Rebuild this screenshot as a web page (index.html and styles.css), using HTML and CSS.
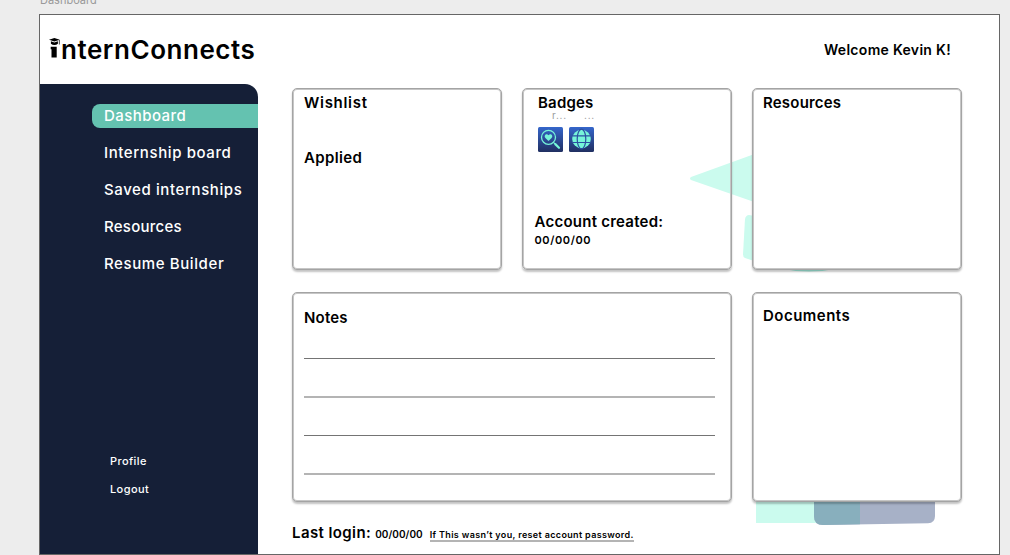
FILE: index.html
```html
<!DOCTYPE html>
<html lang="en">
<head>
<meta charset="utf-8">
<title>Dashboard</title>
<link rel="stylesheet" href="styles.css">
</head>
<body>
<div class="frame-name">Dashboard</div>
<div class="artboard">
  <header class="header">
    <div class="logo">
      <svg class="logo-mark" width="11" height="21" viewBox="0 0 11 21">
        <path d="M0 1.800 5.400.1l5.400 1.700-5.400 1.800z"/>
        <path d="M1.900 3.200v2.600c1.900 1.600 5.100 1.600 7 0V3.200L5.400 4.400z"/>
        <path d="M9.900 1.900h.7v4.600h-.7zM1.700 8.700h6v10.800H2.500V11.200h-.8z"/>
      </svg>
      <span class="logo-text">nternConnects</span>
    </div>
    <div class="welcome">Welcome Kevin K!</div>
  </header>
  <div class="body">
    <aside class="sidebar">
      <nav class="nav">
        <a class="nav-item active">Dashboard</a>
        <a class="nav-item">Internship board</a>
        <a class="nav-item">Saved internships</a>
        <a class="nav-item tight">Resources</a>
        <a class="nav-item">Resume Builder</a>
      </nav>
      <div class="account-links"><a>Profile</a><a>Logout</a></div>
    </aside>
    <main class="main">
      <svg class="decor" width="741" height="470" viewBox="258 84 741 470">
        <path fill="#cbfbee" d="M691 177 760 152v52l-69-24q-2-1.500 0-3z"/>
        <path fill="#cbfbee" d="M745 219q1-4 4-4l11 2v46l-15-5q-2-1-2-3.500z"/>
        <path fill="#a4efdf" d="M778 268h62q-31 7-62 0z"/>
        <path fill="#cbfbee" d="M756 495h104v28H756z"/>
        <path fill="#a7b1c7" d="M814 490h121v26q0 7-7 7.300L823 525q-9 0-9-9z"/>
        <path fill="#88afbd" d="M814 490h46v34.300L823 525q-9 0-9-9z"/>
      </svg>
      <div class="cards">
        <section class="card"><h2 class="wish">Wishlist</h2><h2 class="applied">Applied</h2></section>
        <section class="card badges">
          <h2>Badges</h2>
          <div class="badge-names"><span>r...</span><span>...</span></div>
          <div class="badge-row">
            <svg width="25" height="25" viewBox="0 0 25 25">
              <defs><linearGradient id="blue" x2="0" y2="1"><stop stop-color="#3566cb"/><stop offset="1" stop-color="#202f61"/></linearGradient></defs>
              <rect width="25" height="25" rx="1.500" fill="url(#blue)"/>
              <circle cx="10.500" cy="10.300" r="7" fill="none" stroke="#76f5d9" stroke-width="1.300"/>
              <path d="m15.500 15.300 1.600 1.600" stroke="#76f5d9" stroke-width="1.200"/>
              <path d="m17.300 17.100 3.700 3.700" stroke="#76f5d9" stroke-width="2.200" stroke-linecap="round"/>
              <path d="M10.500 14 7.400 11C5.400 8.800 8.300 5.900 10.500 8.200c2.200-2.300 5.100.6 3.100 2.800z" fill="#76f5d9"/>
            </svg>
            <svg width="25" height="25" viewBox="0 0 25 25">
              <rect width="25" height="25" rx="1.500" fill="url(#blue)"/>
              <circle cx="12.500" cy="12" r="9.300" fill="#76f5d9"/>
              <g fill="none" stroke="#2b50a1" stroke-width="1.200"><ellipse cx="12.500" cy="12" rx="4.300" ry="9.800"/><path d="M3 8.800h19M3 15.500h19"/></g>
            </svg>
          </div>
          <h2 class="created">Account created:</h2>
          <div class="date">00/00/00</div>
        </section>
        <section class="card"><h2 class="resources">Resources</h2></section>
        <section class="card notes">
          <h2>Notes</h2>
          <div class="lines"><i></i><i class="soft"></i><i></i><i class="soft"></i></div>
        </section>
        <section class="card documents"><h2 class="docs-title">Documents</h2></section>
      </div>
      <footer class="login">
        <span class="login-label">Last login:</span>
        <span class="login-date">00/00/00</span>
        <a class="reset">If This wasn’t you, reset account password.</a>
      </footer>
    </main>
  </div>
</div>
</body>
</html>
```
FILE: styles.css
```css
* { box-sizing: border-box; }
body { margin: 0; width: 1010px; height: 555px; overflow: hidden; background: #ededed; font-family: Inter, sans-serif; color: #000; }
.frame-name { height: 14px; padding-left: 40px; font: 11px/14px Inter, sans-serif; letter-spacing: 0; color: #999; margin-top: -7px; margin-bottom: 7px; }
.artboard { width: 961px; height: 541px; margin-left: 39px; border: 1px solid #666; background: #fff; }
.header { display: flex; justify-content: space-between; height: 69px; padding: 0 48px 0 9px; }
.logo { display: flex; align-items: flex-start; padding-top: 23px; }
.logo-text { font-size: 26px; line-height: 24px; font-weight: 600; letter-spacing: .55px; margin-left: 1px; }
.welcome { font-size: 14px; font-weight: 600; line-height: 20px; padding-top: 25px; letter-spacing: .3px; }
.body { display: flex; height: 470px; }
.sidebar { display: flex; flex-direction: column; width: 218px; background: #151f37; border-top-right-radius: 13px; padding-top: 20px; color: #fff; }
.nav { display: flex; flex-direction: column; gap: 13px; padding-left: 52px; }
.nav-item { height: 24px; padding-left: 12px; font-size: 15px; line-height: 24px; font-weight: 500; letter-spacing: .6px; white-space: nowrap; }
.nav-item.active { background: #64c2b0; border-radius: 8px 0 0 8px; letter-spacing: .45px; }
.nav-item.tight { letter-spacing: .25px; }
.account-links { display: flex; flex-direction: column; gap: 12px; padding: 177px 0 0 70px; font-size: 11px; line-height: 16px; font-weight: 500; letter-spacing: .4px; }
.main { position: relative; width: 741px; padding: 4px 37px 0 34px; }
.decor { position: absolute; left: 0; top: 0; }
.cards { position: relative; display: grid; grid-template-columns: repeat(3, 210px); grid-template-rows: 182px 210px; column-gap: 20px; row-gap: 22px; }
.card { border: 1px solid #a4a4a4; border-radius: 5px; background: #fff; box-shadow: inset 0 0 0 1px #c6c6c6, 0 2px 2px rgba(0,0,0,.24); padding: 4px 11px 0; }
h2 { margin: 0; font-size: 15px; line-height: 20px; font-weight: 600; letter-spacing: .2px; }
.wish { letter-spacing: .7px; }
.applied { margin-top: 35px; letter-spacing: .35px; }
.badges { background: none; padding-left: 15px; }
.badge-names { display: flex; gap: 17px; height: 9px; margin: -2px 0 0 14px; color: #999; font-size: 10px; line-height: 9px; letter-spacing: .8px; }
.badge-row { display: flex; gap: 6px; margin-top: 7px; }
.created { margin: 60px 0 0 -3.5px; letter-spacing: .25px; }
.date { margin-left: -3.5px; font-size: 11px; line-height: 17px; font-weight: 600; letter-spacing: .6px; }
.resources { margin-left: -1px; }
.notes { grid-column: span 2; padding-top: 15px; }
.lines { display: flex; flex-direction: column; gap: 37px; width: 411px; margin-top: 30px; }
.lines i { height: 1px; background: #747474; }
.lines .soft { height: 2px; background: #b4b4b4; }
.documents { padding-top: 13px; }
.docs-title { margin-left: -1px; letter-spacing: .48px; }
.login { position: relative; display: flex; align-items: baseline; padding-top: 21px; line-height: 20px; white-space: nowrap; font-weight: 600; }
.login-label { font-size: 15px; letter-spacing: .4px; }
.login-date { margin-left: 4px; font-size: 10px; letter-spacing: .05px; }
.reset { margin-left: 7px; font-size: 9px; line-height: 11px; letter-spacing: .35px; border-bottom: 2px solid #b4b4b4; }
```
